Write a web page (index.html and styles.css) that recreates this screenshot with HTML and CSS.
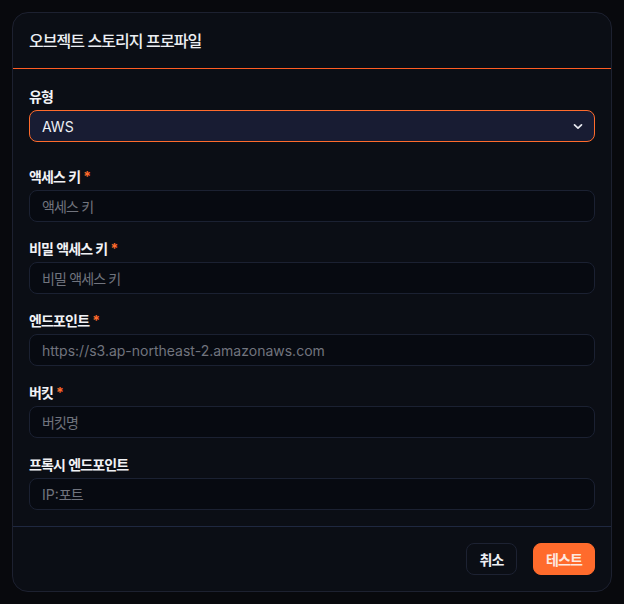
FILE: index.html
```html
<!DOCTYPE html>
<html lang="ko">
<head>
<meta charset="utf-8">
<title>오브젝트 스토리지 프로파일</title>
<link rel="stylesheet" href="styles.css">
</head>
<body>
<div class="card">
  <div class="card-header"><span class="ko">오브젝트 스토리지 프로파일</span></div>
  <div class="card-body">
    <div class="field field-first">
      <label class="label"><span class="ko">유형</span></label>
      <div class="select">
        <span class="select-value">AWS</span>
        <svg class="chevron" width="10" height="7" viewBox="0 0 10 7"><path d="M1.5 1.8 L5 5.2 L8.5 1.8" fill="none" stroke="#e6e8ef" stroke-width="1.7" stroke-linecap="round" stroke-linejoin="round"/></svg>
      </div>
    </div>
    <div class="field">
      <label class="label"><span class="ko">액세스 키</span><span class="req">*</span></label>
      <div class="input"><span class="ph ko">액세스 키</span></div>
    </div>
    <div class="field">
      <label class="label"><span class="ko">비밀 액세스 키</span><span class="req">*</span></label>
      <div class="input"><span class="ph ko">비밀 액세스 키</span></div>
    </div>
    <div class="field">
      <label class="label"><span class="ko">엔드포인트</span><span class="req">*</span></label>
      <div class="input"><span class="ph">https://s3.ap-northeast-2.amazonaws.com</span></div>
    </div>
    <div class="field">
      <label class="label"><span class="ko">버킷</span><span class="req">*</span></label>
      <div class="input"><span class="ph ko">버킷명</span></div>
    </div>
    <div class="field">
      <label class="label"><span class="ko">프록시 엔드포인트</span></label>
      <div class="input"><span class="ph">IP:<span class="ko">포트</span></span></div>
    </div>
  </div>
  <div class="card-footer">
    <button class="btn btn-cancel"><span class="ko">취소</span></button>
    <button class="btn btn-primary"><span class="ko">테스트</span></button>
  </div>
</div>
</body>
</html>
```

FILE: styles.css
```css
* { box-sizing: border-box; }
html, body { margin: 0; padding: 0; }
body {
  background: #08090d;
  font-family: "Inter", "Noto Sans CJK KR", sans-serif;
  color: #eceef3;
  width: 624px;
  height: 604px;
  padding: 12px;
}
.ko { letter-spacing: -0.06em; font-family: "Noto Sans CJK KR", "Inter", sans-serif; }
.card {
  width: 600px;
  background: #0b0e15;
  border: 1px solid #1d2130;
  border-radius: 16px;
  display: flex;
  flex-direction: column;
}
.card-header {
  height: 56px;
  padding: 0 16px 1px;
  font-size: 16px;
  font-weight: 500;
  color: #eceef3;
  border-bottom: 1px solid #ff5d24;
  display: flex;
  align-items: center;
}
.card-body {
  padding: 17px 16px 16px;
  display: flex;
  flex-direction: column;
  gap: 16px;
}
.field { display: flex; flex-direction: column; gap: 4px; }
.field-first { margin-bottom: 8px; }
.label {
  font-size: 14px;
  height: 20px;
  font-weight: 700;
  color: #f1f2f5;
  display: flex;
  align-items: center;
}
.req {
  color: #ff6a2b;
  margin-left: 3px;
  font-size: 14px;
  font-weight: 700;
}
.select {
  height: 32px;
  border: 1px solid #ff6b2c;
  border-radius: 8px;
  background: #181c33;
  display: flex;
  align-items: center;
  justify-content: space-between;
  padding: 0 11px 0 12px;
  font-size: 14px;
  color: #eef0f5;
}
.chevron { display: block; }
.input {
  height: 32px;
  border: 1px solid #1b2132;
  border-radius: 8px;
  background: #070a11;
  display: flex;
  align-items: center;
  padding: 0 12px;
  font-size: 14px;
}
.ph { color: #71747e; }
.card-footer {
  height: 65px;
  border-top: 1px solid #1f2840;
  padding: 0 16px;
  display: flex;
  align-items: center;
  justify-content: flex-end;
  gap: 16px;
}
.btn {
  height: 32px;
  border-radius: 8px;
  font-size: 14px;
  font-weight: 700;
  font-family: inherit;
  padding: 0;
  display: flex;
  align-items: center;
  justify-content: center;
  cursor: pointer;
}
.btn-cancel {
  width: 51px;
  background: #0b0e15;
  border: 1px solid #1d2232;
  color: #eef0f4;
}
.btn-primary {
  width: 62px;
  background: #ff6b2c;
  border: 1px solid #ff6b2c;
  color: #fde9e0;
}
```
